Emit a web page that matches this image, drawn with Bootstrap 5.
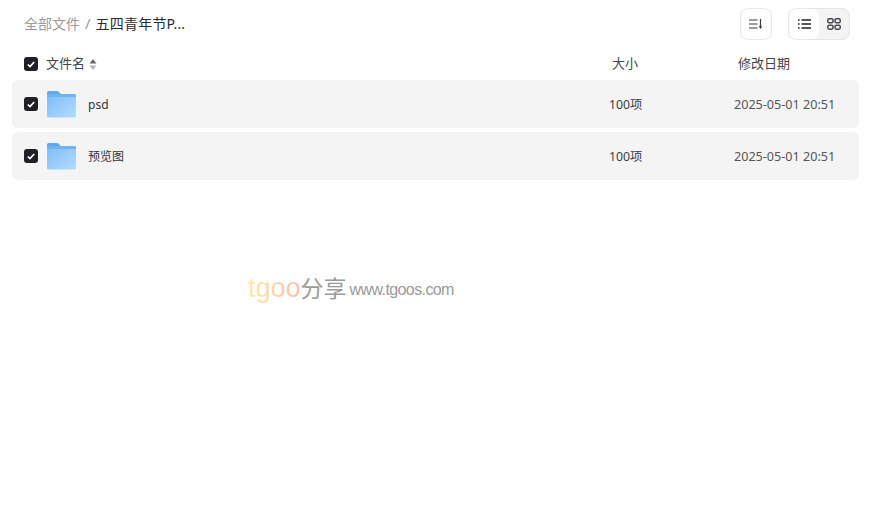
<!DOCTYPE html>
<html lang="zh-CN">
<head>
    <meta charset="UTF-8">
    <title>全部文件</title>
    <link href="https://cdn.jsdelivr.net/npm/bootstrap@5.3.0/dist/css/bootstrap.min.css" rel="stylesheet">
    <style>
        body {
            background: #fff;
            font-family: "Noto Sans", "Noto Sans CJK SC", sans-serif;
            font-size: 13px;
            color: #3b3b46;
            overflow: hidden;
        }
        .page-wrap { padding: 8px 15px 0 12px; }
        .top-bar { height: 32px; padding: 0 9px 0 12px; margin-bottom: 8px; }
        .crumb-wrap { padding-bottom: 2px; }
        .crumb-root { color: #9a9a9f; font-size: 14px; }
        .crumb-sep { color: #9a9a9f; font-size: 15px; margin: 0 5px; }
        .crumb-now { color: #2a2b33; font-size: 14px; letter-spacing: .2px; }
        .sort-btn {
            width: 32px; height: 32px;
            border: 1px solid #e6e6e6; border-radius: 8px;
            background: #fff;
        }
        .view-switch {
            width: 62px; height: 32px;
            border: 1px solid #e6e6e6; border-radius: 8px;
            background: #f3f3f3; overflow: hidden;
        }
        .view-item { width: 30px; height: 30px; }
        .view-on { background: #fff; border-radius: 7px; }
        .head-row { height: 32px; padding: 0 12px; color: #44444f; }
        .file-row {
            height: 48px; padding: 0 12px;
            background: #f4f4f4; border-radius: 6px;
            margin-bottom: 4px;
            font-size: 12.3px;
        }
        .tick {
            width: 14px; height: 14px; flex: none;
            background: #1f1f26; border-radius: 3px;
        }
        .name-cell { width: 574px; }
        .size-cell { width: 136px; text-align: left; }
        .date-cell { white-space: nowrap; }
        .head-row .name-cell span { margin-left: 8px; }
        .file-row .folder-ico { margin: 0 11px 0 9px; flex: none; }
        .head-size { padding-left: 14px; }
        .head-date { padding-left: 4px; }
        .row-size { padding-left: 11px; padding-top: 2px; }
        .row-date { color: #55555c; font-size: 12.6px; padding-top: 2px; }
        .row-name { color: #33333d; font-size: 12px; padding-top: 2px; }
        .sort-arrows { margin-left: 4px; }
        .water-mark {
            position: absolute; left: 248px; top: 272px;
            height: 32px; white-space: nowrap; color: #9b9b9b;
        }
        .wm-brand {
            font-family: "Liberation Sans", sans-serif;
            font-size: 27px; line-height: 32px;
            background: linear-gradient(to right, #fee9a8, #fdbcab);
            -webkit-background-clip: text; background-clip: text; color: transparent;
        }
        .wm-cn { font-size: 23px; line-height: 32px; }
        .wm-url { font-family: "Liberation Sans", sans-serif; font-size: 16px; margin: 4px 0 0 3px; letter-spacing: -.6px; }
    </style>
</head>
<body>
    <div class="page-wrap">
        <div class="top-bar d-flex align-items-center justify-content-between">
            <div class="crumb-wrap d-flex align-items-center">
                <span class="crumb-root">全部文件</span><span class="crumb-sep">/</span><span class="crumb-now">五四青年节P...</span>
            </div>
            <div class="d-flex gap-3">
                <div class="sort-btn d-flex align-items-center justify-content-center">
                    <svg width="14" height="12" viewBox="0 0 14 12" fill="none" stroke="#3a3a42" stroke-width="1.2">
                        <path d="M0 2h8.500M0 6h8.500M0 10h8.500M11.500 1v8"/><path d="M9.700 8.200 11.500 11l1.800-2.800z" fill="#3a3a42" stroke="none"/>
                    </svg>
                </div>
                <div class="view-switch d-flex">
                    <div class="view-item view-on d-flex align-items-center justify-content-center">
                        <svg width="13" height="10" viewBox="0 0 13 10" fill="none" stroke="#1f1f26" stroke-width="1.3">
                            <path d="M0 1h1.600M3.500 1H13M0 5h1.600M3.500 5H13M0 9h1.600M3.500 9H13"/>
                        </svg>
                    </div>
                    <div class="view-item d-flex align-items-center justify-content-center">
                        <svg width="14" height="12" viewBox="0 0 14 12" fill="none" stroke="#46464d" stroke-width="1.5">
                            <rect x=".8" y=".8" width="5.200" height="4" rx="1.400"/><rect x="8" y=".8" width="5.200" height="4" rx="1.400"/>
                            <rect x=".8" y="7.200" width="5.200" height="4" rx="1.400"/><rect x="8" y="7.200" width="5.200" height="4" rx="1.400"/>
                        </svg>
                    </div>
                </div>
            </div>
        </div>

        <div class="head-row d-flex align-items-center">
            <div class="name-cell d-flex align-items-center">
                <div class="tick d-flex align-items-center justify-content-center">
                    <svg width="8" height="7" viewBox="0 0 8 7" fill="none" stroke="#fff" stroke-width="1.700"><path d="M.8 3.500 3 5.600 7.200 1"/></svg>
                </div>
                <span>文件名</span>
                <svg class="sort-arrows" width="8" height="11" viewBox="0 0 8 11"><path d="M4 0 7.500 4.500H.5z" fill="#66666c"/><path d="M4 11 7.500 6.500H.5z" fill="#b5b5b8"/></svg>
            </div>
            <div class="size-cell head-size">大小</div>
            <div class="date-cell head-date">修改日期</div>
        </div>

        <div class="file-row d-flex align-items-center">
            <div class="name-cell d-flex align-items-center">
                <div class="tick d-flex align-items-center justify-content-center">
                    <svg width="8" height="7" viewBox="0 0 8 7" fill="none" stroke="#fff" stroke-width="1.700"><path d="M.8 3.500 3 5.600 7.200 1"/></svg>
                </div>
                <svg class="folder-ico" width="30" height="28" viewBox="0 0 30 28">
                    <defs><linearGradient id="fg" x1="0" y1="0" x2="1" y2="1"><stop offset="0" stop-color="#7cbcf8"/><stop offset="1" stop-color="#b4dcfd"/></linearGradient></defs>
                    <path d="M0 3q0-2 2-2h8q1.500 0 2.500 1.500l1 1.500H0z" fill="#5eaaf1"/>
                    <path d="M0 4h27.500q1.500 0 1.500 1.500V26q0 1.500-1.500 1.500H1.500Q0 27.500 0 26z" fill="url(#fg)"/>
                    <path d="M0 4h27.500q1.500 0 1.500 1.500V7H0z" fill="#6db4f5"/>
                </svg>
                <span class="row-name">psd</span>
            </div>
            <div class="size-cell row-size">100项</div>
            <div class="date-cell row-date">2025-05-01 20:51</div>
        </div>

        <div class="file-row d-flex align-items-center">
            <div class="name-cell d-flex align-items-center">
                <div class="tick d-flex align-items-center justify-content-center">
                    <svg width="8" height="7" viewBox="0 0 8 7" fill="none" stroke="#fff" stroke-width="1.700"><path d="M.8 3.500 3 5.600 7.200 1"/></svg>
                </div>
                <svg class="folder-ico" width="30" height="28" viewBox="0 0 30 28">
                    <path d="M0 3q0-2 2-2h8q1.500 0 2.500 1.500l1 1.500H0z" fill="#5eaaf1"/>
                    <path d="M0 4h27.500q1.500 0 1.500 1.500V26q0 1.500-1.500 1.500H1.500Q0 27.500 0 26z" fill="url(#fg)"/>
                    <path d="M0 4h27.500q1.500 0 1.500 1.500V7H0z" fill="#6db4f5"/>
                </svg>
                <span class="row-name">预览图</span>
            </div>
            <div class="size-cell row-size">100项</div>
            <div class="date-cell row-date">2025-05-01 20:51</div>
        </div>

        <div class="water-mark d-flex align-items-center">
            <span class="wm-brand">tgoo</span><span class="wm-cn">分享</span><span class="wm-url">www.tgoos.com</span>
        </div>
    </div>
</body>
</html>
